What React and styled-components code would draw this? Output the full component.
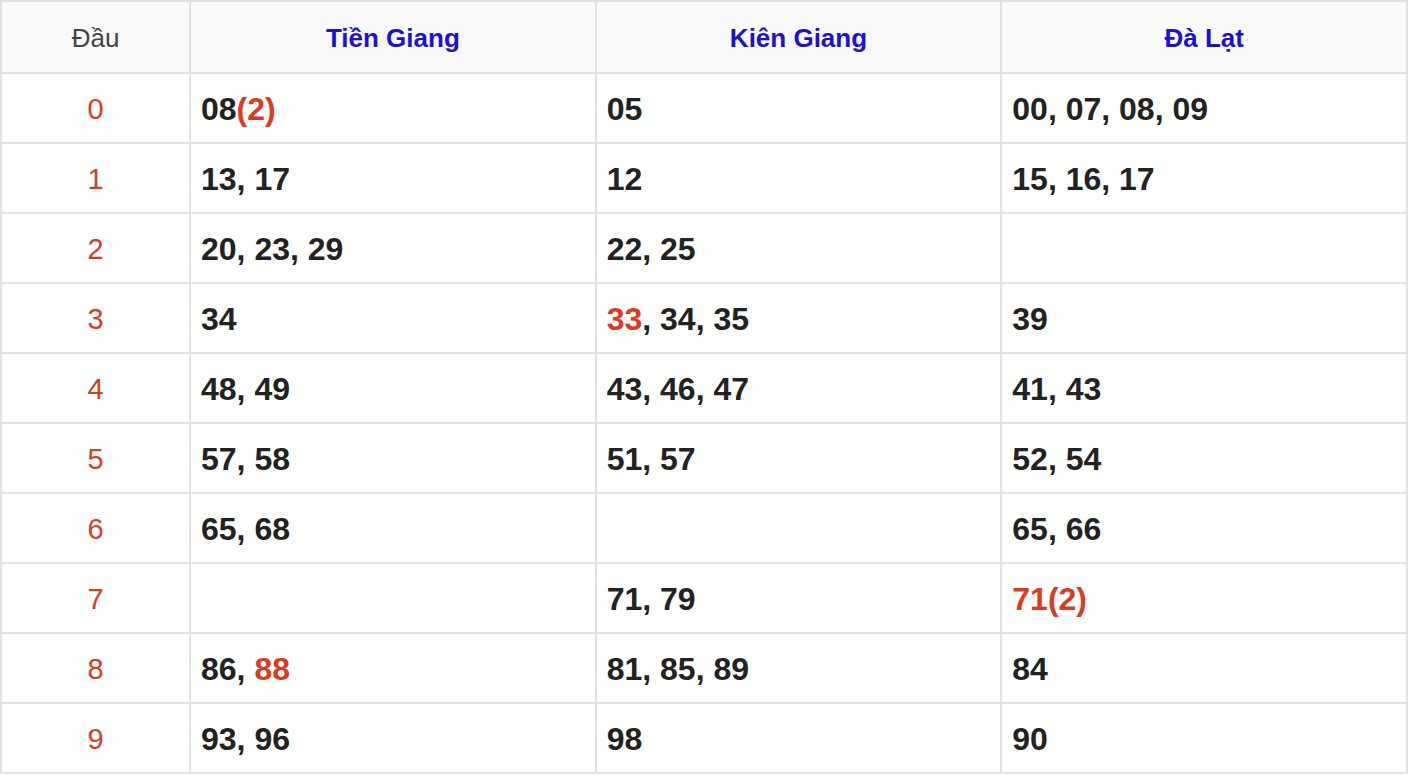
import styled, { createGlobalStyle } from 'styled-components';

const GlobalStyle = createGlobalStyle`
  body {
    margin: 0;
    background: #ffffff;
    font-family: "Liberation Sans", Arial, sans-serif;
  }
`;

const provinces = ['Tiền Giang', 'Kiên Giang', 'Đà Lạt'];

// each cell: list of [text, hot]
const rows = [
  [[['08', false], ['(2)', true]], [['05', false]], [['00, 07, 08, 09', false]]],
  [[['13, 17', false]], [['12', false]], [['15, 16, 17', false]]],
  [[['20, 23, 29', false]], [['22, 25', false]], []],
  [[['34', false]], [['33', true], [', 34, 35', false]], [['39', false]]],
  [[['48, 49', false]], [['43, 46, 47', false]], [['41, 43', false]]],
  [[['57, 58', false]], [['51, 57', false]], [['52, 54', false]]],
  [[['65, 68', false]], [], [['65, 66', false]]],
  [[], [['71, 79', false]], [['71', true], ['(2)', true]]],
  [[['86, ', false], ['88', true]], [['81, 85, 89', false]], [['84', false]]],
  [[['93, 96', false]], [['98', false]], [['90', false]]],
];

export default function App() {
  return (
    <>
      <GlobalStyle />
      <Table>
        <colgroup>
          <col style={{ width: 189 }} />
          <col />
          <col />
          <col />
        </colgroup>
        <thead>
          <tr>
            <HeadCell>Đầu</HeadCell>
            {provinces.map((p) => (
              <HeadCell key={p} $province>{p}</HeadCell>
            ))}
          </tr>
        </thead>
        <tbody>
          {rows.map((cells, i) => (
            <tr key={i}>
              <HeadNum>{i}</HeadNum>
              {cells.map((parts, j) => (
                <NumCell key={j}>
                  {parts.map(([t, hot], k) => (
                    <Num key={k} $hot={hot}>{t}</Num>
                  ))}
                </NumCell>
              ))}
            </tr>
          ))}
        </tbody>
      </Table>
    </>
  );
}

const Table = styled.table`
  width: 1408px;
  border-collapse: collapse;
  table-layout: fixed;
  border: 2px solid #e1e1e1;
`;

const HeadCell = styled.th`
  height: 68px;
  padding: 2px 0 0;
  background: #f9f9f9;
  border: 2px solid #e1e1e1;
  text-align: center;
  vertical-align: middle;
  font-size: 26px;
  font-weight: ${(p) => (p.$province ? 700 : 400)};
  color: ${(p) => (p.$province ? '#1d10d8' : '#444444')};
`;

const HeadNum = styled.td`
  height: 66px;
  padding: 2px 0 0;
  border: 2px solid #e1e1e1;
  text-align: center;
  vertical-align: middle;
  font-size: 29px;
  color: #dc3b1e;
`;

const NumCell = styled.td`
  height: 66px;
  padding: 2px 10px 0;
  border: 2px solid #e1e1e1;
  vertical-align: middle;
  font-size: 32px;
  font-weight: 700;
  color: #222222;
`;

const Num = styled.span`
  color: ${(p) => (p.$hot ? '#dc3b1e' : '#222222')};
`;
